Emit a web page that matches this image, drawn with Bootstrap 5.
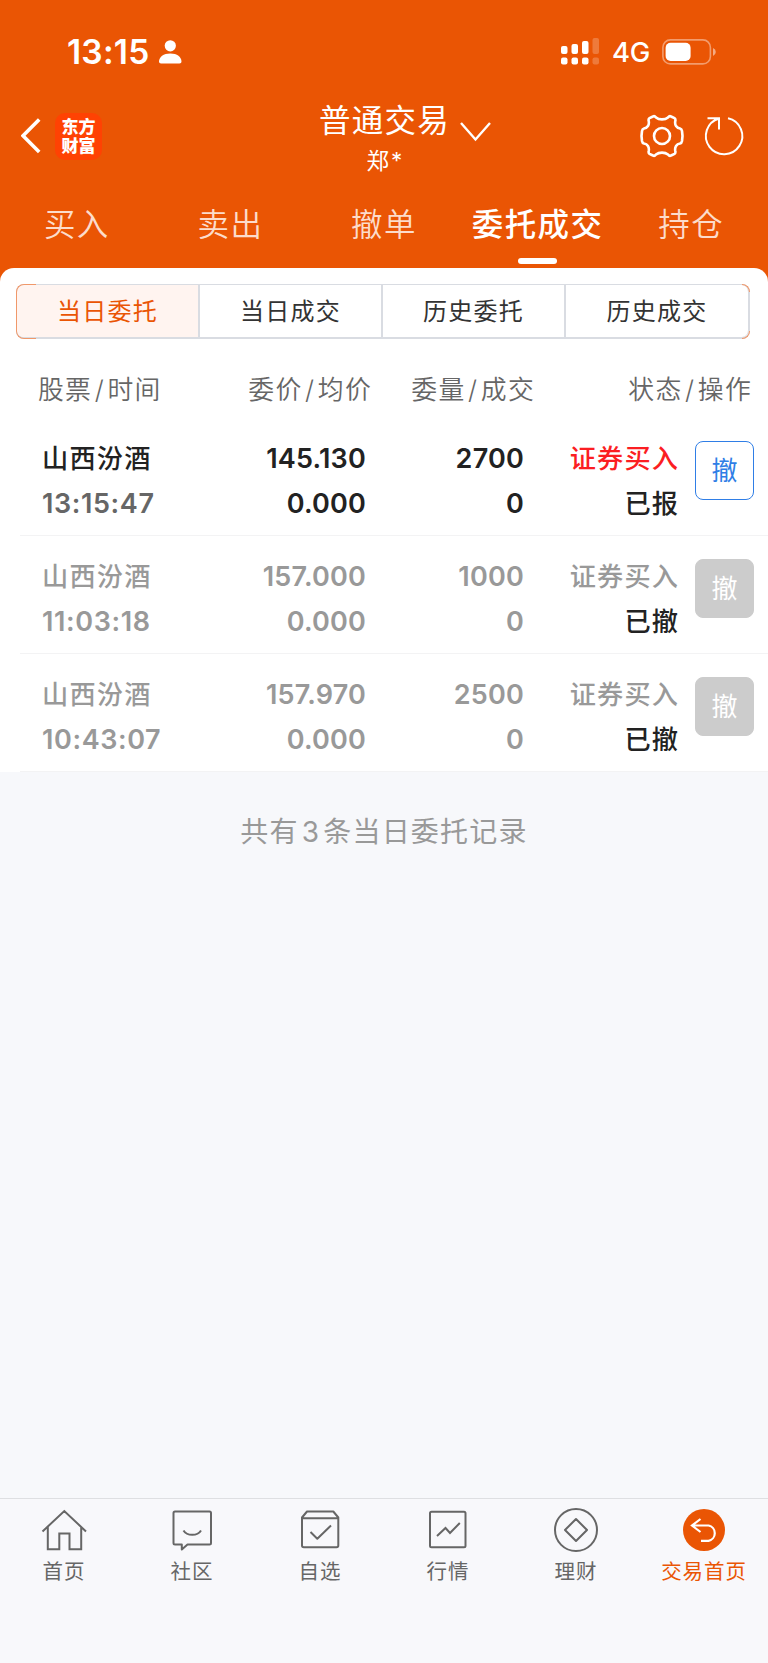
<!DOCTYPE html>
<html lang="zh-CN">
<head>
<meta charset="utf-8">
<meta name="viewport" content="width=device-width, initial-scale=1">
<title>普通交易</title>
<link href="https://cdn.jsdelivr.net/npm/bootstrap@5.3.0/dist/css/bootstrap.min.css" rel="stylesheet">
<style>
  :root { --brand: #ea5504; }
  body { font-family: Inter, "Noto Sans CJK SC", sans-serif; background: #f7f8fb; color: #222; min-height: 1663px; }
  svg { display: block; flex: none; }
  .top-area { background: var(--brand); height: 282px; }
  .status-bar { height: 102px; padding: 1px 52px 0 67px; }
  .clock { font-size: 33.5px; font-weight: 600; line-height: 40px; letter-spacing: .2px; width: 92px; }
  .net { font-size: 27.5px; font-weight: 500; line-height: 40px; margin: 0 0 0 12px; width: 50px; letter-spacing: -.3px; }
  .title-bar { height: 80px; padding: 0 20px 0 21px; }
  .side { width: 240px; height: 68px; }
  .app-logo { width: 47px; height: 47px; border-radius: 10px; background: #ff4203; margin-left: 14px; padding-bottom: 2px; font-family: "Noto Sans CJK SC", sans-serif; font-weight: 900; font-size: 17px; line-height: 19.5px; }
  .title-text { font-size: 31.5px; line-height: 38px; letter-spacing: 1.2px; }
  .user-text { font-size: 22.5px; line-height: 30px; padding-top: 6px; }
  .user-text span { letter-spacing: 2px; }
  .title-caret { left: calc(100% + 10px); top: 20px; }
  .tab-bar { height: 86px; }
  .tab-bar .nav-link { padding: 0; height: 86px; line-height: 86px; font-size: 31.5px; letter-spacing: 1.4px; font-weight: 350; color: #fcdccb; position: relative; white-space: nowrap; }
  .tab-bar .nav-link.active { color: #fff; font-weight: 500; }
  .tab-bar .nav-link.active::after { content: ""; position: absolute; left: 50%; bottom: 4px; width: 39px; height: 6px; margin-left: -20px; border-radius: 3px; background: #fff; }
  .sheet { margin-top: -14px; border-radius: 14px 14px 0 0; background: #fff; padding-top: 16px; }
  .seg { margin: 0 18px 0 16px; height: 55px; border: 1px solid #d9dce2; border-bottom-width: 2px; border-radius: 8px; position: relative; }
  .seg > a { height: 52px; font-size: 24px; letter-spacing: 1.2px; line-height: 54px; color: #333; text-decoration: none; border-right: 2px solid #d9dce2; }
  .seg > a:first-child { background: #fff4f0; color: var(--brand); border-radius: 7px 0 0 7px; }
  .seg > a:last-of-type { border-right: 1px solid #d9dce2; border-radius: 0 7px 7px 0; }
  .corner { position: absolute; width: 8px; height: 8px; border: 1px solid #f0986a; pointer-events: none; }
  .corner-l { left: -1px; width: 20px; border-right: 0; }
  .corner-r { right: -1px; border-left: 0; }
  .corner-t { top: -1px; border-bottom: 0; }
  .corner-b { bottom: -2px; border-top: 0; }
  .corner-l.corner-t { border-top-left-radius: 8px; height: 28px; }
  .corner-l.corner-b { border-bottom-left-radius: 8px; height: 28px; }
  .corner-r.corner-t { border-top-right-radius: 8px; }
  .corner-r.corner-b { border-bottom-right-radius: 8px; }
  .head-row { display: grid; grid-template-columns: 209px 163px 163px 217px; width: 752px; height: 79px; padding-top: 11px; line-height: 80px; font-size: 25.8px; letter-spacing: 1.3px; font-weight: 350; color: #666; }
  .head-row i { font-style: normal; margin: 0 2.5px; }
  .head-row > :first-child { padding-left: 38px; }
  .orders { display: grid; grid-template-columns: 203px 163px 158px 154px 1fr; }
  .order-row { height: 118px; padding-top: 17.5px; font-size: 27px; font-weight: 600; line-height: 45px; position: relative; }
  .order-row::after { content: ""; position: absolute; left: 20px; right: 0; bottom: 0; height: 1px; background: #f3f3f4; }
  .stock { padding-left: 42px; }
  .figure-col { letter-spacing: .2px; }
  .cn { font-size: 26.2px; font-weight: 500; letter-spacing: 1.2px; margin-right: -1.2px; }
  .stamp { color: #666; letter-spacing: .6px; }
  .is-done, .is-done .stamp { color: #999; }
  .state { color: #222; }
  .buy { color: #fb1e22; }
  .is-done .buy { color: #999; }
  .btn-undo { width: 59px; height: 59px; margin: 5.5px 0 0 17px; padding: 0; border: 1px solid #2f7ee6; border-radius: 8px; color: #2f7ee6; font-size: 26px; line-height: 58px; background: #fff; }
  .is-done .btn-undo { background: #ccc; border-color: #ccc; color: #fff; }
  .summary { font-size: 28px; line-height: 40px; letter-spacing: 1.2px; color: #999; padding-top: 40px; }
  .summary span { margin: 0 3px; }
  .dock { height: 165px; border-top: 1px solid #dedfe2; background: #f8f8fb; color: #666; padding-top: 8px; }
  .dock a { color: inherit; text-decoration: none; font-size: 20.5px; line-height: 30px; letter-spacing: .9px; }
  .dock a.active { color: var(--brand); }
  .dock svg { margin-bottom: 4px; }
</style>
</head>
<body class="d-flex flex-column">
<header class="top-area text-white">
  <div class="status-bar d-flex align-items-center">
    <span class="clock">13:15</span>
    <svg width="23" height="24" viewBox="0 0 23 24" fill="#fff"><circle cx="11.3" cy="5.8" r="5.6"/><path d="M0 21.8C0 17 4.5 13.5 11.3 13.5S22.5 17 22.5 21.8Q22.5 23.5 20.5 23.5H2Q0 23.5 0 21.8Z"/></svg>
    <svg class="ms-auto" width="39" height="27" viewBox="0 0 39 27" fill="#fff"><rect x="0" y="8" width="6.5" height="8" rx="2"/><rect x="10.5" y="6" width="6.5" height="10" rx="2"/><rect x="21" y="3" width="6.5" height="13" rx="2"/><rect x="0" y="19.5" width="6.5" height="7" rx="2"/><rect x="10.5" y="19.5" width="6.5" height="7" rx="2"/><rect x="21" y="19.5" width="6.5" height="7" rx="2"/><g opacity=".22"><rect x="31.5" y="0" width="6.5" height="16" rx="2"/><rect x="31.5" y="19.5" width="6.5" height="7" rx="2"/></g></svg>
    <span class="net">4G</span>
    <svg width="54" height="26" viewBox="0 0 54 26"><rect x=".9" y=".9" width="47.5" height="24" rx="7.5" fill="none" stroke="#fff" stroke-opacity=".42" stroke-width="1.6"/><rect x="3.6" y="3.7" width="25" height="18.2" rx="5" fill="#fff"/><path d="M51 9q2.8 1.2 2.8 4T51 17Z" fill="#fff" opacity=".5"/></svg>
  </div>
  <div class="title-bar d-flex justify-content-between">
    <div class="side d-flex align-items-center">
      <svg width="20" height="36" viewBox="0 0 20 36" fill="none" stroke="#fff" stroke-width="3.6"><path d="M18.2 1.5 2 17.7 18.2 34"/></svg>
      <div class="app-logo d-flex flex-column align-items-center justify-content-center"><span>东方</span><span>财富</span></div>
    </div>
    <div class="text-center position-relative">
      <div class="title-text">普通交易</div>
      <div class="user-text"><span>郑</span>*</div>
      <svg class="position-absolute title-caret" width="32" height="20" viewBox="0 0 32 20" fill="none" stroke="#fff" stroke-width="2.4"><path d="M1 1 15.5 17.5 30 1"/></svg>
    </div>
    <div class="side d-flex align-items-center justify-content-end">
      <svg width="44" height="44" viewBox="-22 -22 44 44" fill="none" stroke="#fff" stroke-width="2.6" stroke-linejoin="round"><circle r="8"/><path d="M-6 -18.500C-3 -16 3 -16 6 -18.500Q7.500 -20.500 9 -19.500L12.500 -17.800Q13.800 -17 13.300 -15C12.500 -11 14.500 -8 18 -7.500Q19.700 -7 20 -5L20.500 0L20 5Q19.700 7 18 7.500C14.500 8 12.500 11 13.300 15Q13.800 17 12.500 17.800L9 19.500Q7.500 20.500 6 18.500C3 16 -3 16 -6 18.500Q-7.500 20.500 -9 19.500L-12.500 17.800Q-13.800 17 -13.300 15C-12.500 11 -14.500 8 -18 7.500Q-19.700 7 -20 5L-20.500 0L-20 -5Q-19.700 -7 -18 -7.500C-14.500 -8 -12.500 -11 -13.300 -15Q-13.800 -17 -12.500 -17.800L-9 -19.500Q-7.500 -20.500 -6 -18.500Z"/></svg>
      <svg class="ms-3" width="48" height="44" viewBox="-24 -22 48 44" fill="none" stroke="#fff" stroke-width="2"><path d="M4 -17.800A18.200 18.200 0 1 1 -5 -17.500M-16.500 -17.800H-5V-6.500"/></svg>
    </div>
  </div>
  <nav class="nav nav-fill nav-justified tab-bar flex-nowrap">
    <a class="nav-link" href="#">买入</a>
    <a class="nav-link" href="#">卖出</a>
    <a class="nav-link" href="#">撤单</a>
    <a class="nav-link active" href="#">委托成交</a>
    <a class="nav-link" href="#">持仓</a>
  </nav>
</header>
<main class="flex-grow-1">
  <section class="sheet">
    <div class="seg row row-cols-4 g-0 text-center">
      <a class="col" href="#">当日委托</a><a class="col" href="#">当日成交</a><a class="col" href="#">历史委托</a><a class="col" href="#">历史成交</a>
      <i class="corner corner-l corner-t"></i><i class="corner corner-l corner-b"></i><i class="corner corner-r corner-t"></i><i class="corner corner-r corner-b"></i>
    </div>
    <div class="head-row">
      <span>股票<i>/</i>时间</span><span class="text-end">委价<i>/</i>均价</span><span class="text-end">委量<i>/</i>成交</span><span class="text-end">状态<i>/</i>操作</span>
    </div>
    <div class="order-row orders">
      <div class="stock"><div class="cn">山西汾酒</div><div class="stamp">13:15:47</div></div>
      <div class="text-end figure-col">145.130<br>0.000</div>
      <div class="text-end figure-col">2700<br>0</div>
      <div class="text-end"><div class="cn buy">证券买入</div><div class="cn state">已报</div></div>
      <button class="btn btn-undo">撤</button>
    </div>
    <div class="order-row orders is-done">
      <div class="stock"><div class="cn">山西汾酒</div><div class="stamp">11:03:18</div></div>
      <div class="text-end figure-col">157.000<br>0.000</div>
      <div class="text-end figure-col">1000<br>0</div>
      <div class="text-end"><div class="cn buy">证券买入</div><div class="cn state">已撤</div></div>
      <button class="btn btn-undo">撤</button>
    </div>
    <div class="order-row orders is-done">
      <div class="stock"><div class="cn">山西汾酒</div><div class="stamp">10:43:07</div></div>
      <div class="text-end figure-col">157.970<br>0.000</div>
      <div class="text-end figure-col">2500<br>0</div>
      <div class="text-end"><div class="cn buy">证券买入</div><div class="cn state">已撤</div></div>
      <button class="btn btn-undo">撤</button>
    </div>
  </section>
  <p class="summary text-center mb-0">共有<span>3</span>条当日委托记录</p>
</main>
<nav class="dock row row-cols-6 g-0 text-center">
  <a class="col d-flex flex-column align-items-center" href="#"><svg width="46" height="46" viewBox="0 0 46 46" fill="none" stroke="currentColor" stroke-width="2"><path d="M1.500 24.500 23.300 4 45 24.500M6.800 20V42.200H18.300V26.500H28.500V42.200H40.200V20"/></svg>首页</a>
  <a class="col d-flex flex-column align-items-center" href="#"><svg width="46" height="46" viewBox="0 0 46 46" fill="none" stroke="currentColor" stroke-width="2" stroke-linejoin="round"><path d="M6 4.500H40.500Q42 4.500 42 6V36Q42 37.500 40.500 37.500H18.500L12.800 42.500V37.500H6Q4.500 37.500 4.500 36V6Q4.500 4.500 6 4.500ZM14.500 23.500C18 29.300 28.500 29.300 32 23.500"/></svg>社区</a>
  <a class="col d-flex flex-column align-items-center" href="#"><svg width="46" height="46" viewBox="0 0 46 46" fill="none" stroke="currentColor" stroke-width="2" stroke-linejoin="round"><path d="M5 10.500 10 4.500H36.300L41.300 10.500V38.500Q41.300 40.300 39.500 40.300H6.800Q5 40.300 5 38.500ZM5 11.300H41.300M13.500 25 20.300 31.800 34 18.500"/></svg>自选</a>
  <a class="col d-flex flex-column align-items-center" href="#"><svg width="46" height="46" viewBox="0 0 46 46" fill="none" stroke="currentColor" stroke-width="2"><rect x="5" y="4.800" width="35.500" height="35.500" rx="1.500"/><path d="M12 29 20.500 21 25 26 34.800 16"/></svg>行情</a>
  <a class="col d-flex flex-column align-items-center" href="#"><svg width="46" height="46" viewBox="0 0 46 46" fill="none" stroke="currentColor" stroke-width="2" stroke-linejoin="round"><circle cx="23" cy="23" r="21"/><path d="M23 12 34 23 23 34 12 23Z"/></svg>理财</a>
  <a class="col d-flex flex-column align-items-center active" href="#"><svg width="46" height="46" viewBox="0 0 46 46" fill="none" stroke="#fff" stroke-width="2.200"><circle cx="23" cy="23" r="21" fill="#ea5504" stroke="none"/><path d="M19.500 12 11 18.500 19.500 25M11 18.500H27.500A7.800 7.800 0 0 1 27.500 33.800H20"/></svg>交易首页</a>
</nav>
<script src="https://cdn.jsdelivr.net/npm/bootstrap@5.3.0/dist/js/bootstrap.bundle.min.js"></script>
</body>
</html>
